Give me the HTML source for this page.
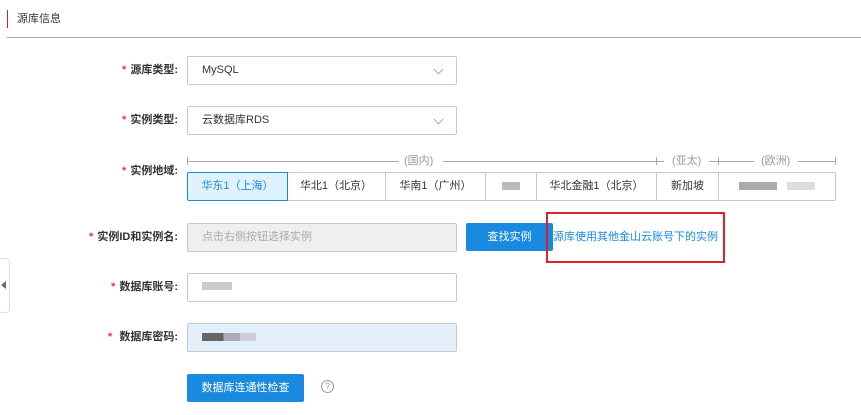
<!DOCTYPE html><html><head><meta charset="utf-8"><style>
body{margin:0;width:861px;height:415px;background:#fff;position:relative;overflow:hidden;font-family:"Liberation Sans","Noto Sans CJK SC",sans-serif;font-size:11px;color:#333}
.a{position:absolute}
.lbl{position:absolute;right:683px;font-weight:bold;color:#333;line-height:28px;white-space:nowrap}
.lbl i{color:#e33;font-style:normal;margin-right:4px}
.inp{position:absolute;left:187px;height:27px;border:1px solid #c8c8c8;border-radius:2px;line-height:27px;padding-left:14px;box-sizing:content-box;width:254px}
.chev{position:absolute;right:14px;top:9px;width:6px;height:6px;border-right:1px solid #aaa;border-bottom:1px solid #aaa;transform:rotate(45deg)}
.btn{position:absolute;background:#1a8ae0;color:#fff;text-align:center;border-radius:2px;line-height:28px;height:28px}
.seg{position:absolute;top:172px;height:27px;border:1px solid #c8c8c8;border-left:none;text-align:center;line-height:27px;color:#333}
.blur{display:inline-block;height:8px;vertical-align:middle}
</style></head><body>
<div class="a" style="left:7px;top:10px;width:1px;height:18px;background:#d0262b"></div>
<div class="a" style="left:17px;top:11px;line-height:16px;color:#333">源库信息</div>
<div class="a" style="left:7px;top:37px;width:854px;height:1px;background:#aaa"></div>

<div class="lbl" style="top:56px"><i>*</i>源库类型:</div>
<div class="inp" style="top:56px">MySQL<span class="chev"></span></div>
<div class="lbl" style="top:106px"><i>*</i>实例类型:</div>
<div class="inp" style="top:106px">云数据库RDS<span class="chev"></span></div>

<div class="lbl" style="top:157px"><i>*</i>实例地域:</div>
<div class="a" style="left:187px;top:157px;width:1px;height:8px;background:#aaa"></div>
<div class="a" style="left:187px;top:161px;width:212px;height:1px;background:#aaa"></div>
<div class="a" style="left:404px;top:154px;color:#999;font-size:11px;line-height:14px">(国内)</div>
<div class="a" style="left:443px;top:161px;width:213px;height:1px;background:#aaa"></div>
<div class="a" style="left:656px;top:157px;width:1px;height:8px;background:#aaa"></div>
<div class="a" style="left:656px;top:161px;width:8px;height:1px;background:#aaa"></div>
<div class="a" style="left:672px;top:154px;color:#999;font-size:11px;line-height:14px">(亚太)</div>
<div class="a" style="left:709px;top:161px;width:9px;height:1px;background:#aaa"></div>
<div class="a" style="left:718px;top:157px;width:1px;height:8px;background:#aaa"></div>
<div class="a" style="left:718px;top:161px;width:36px;height:1px;background:#aaa"></div>
<div class="a" style="left:761px;top:154px;color:#999;font-size:11px;line-height:14px">(欧洲)</div>
<div class="a" style="left:798px;top:161px;width:37px;height:1px;background:#aaa"></div>
<div class="a" style="left:835px;top:157px;width:1px;height:8px;background:#aaa"></div>

<div class="seg" style="left:187px;width:99px;border:1px solid #1a8ae0;background:#e0f2fd;color:#1a8ae0;z-index:2;border-radius:2px 0 0 2px">华东1（上海）</div>
<div class="seg" style="left:287px;width:98px">华北1（北京）</div>
<div class="seg" style="left:386px;width:99px">华南1（广州）</div>
<div class="seg" style="left:486px;width:50px"><span class="blur" style="width:18px;background:#bbb"></span></div>
<div class="seg" style="left:537px;width:119px">华北金融1（北京）</div>
<div class="seg" style="left:657px;width:61px">新加坡</div>
<div class="seg" style="left:719px;width:116px;border-radius:0 2px 2px 0"><span class="blur" style="width:38px;background:#aaa"></span><span class="blur" style="width:10px"></span><span class="blur" style="width:28px;background:#ddd"></span></div>

<div class="lbl" style="top:223px"><i>*</i>实例ID和实例名:</div>
<div class="inp" style="top:223px;background:#efefef;color:#aaa">点击右侧按钮选择实例</div>
<div class="btn" style="left:466px;top:223px;width:87px">查找实例</div>
<div class="a" style="left:546px;top:212px;width:175px;height:47px;border:2px solid #e0202a"></div>
<div class="a" style="left:553px;top:229px;color:#1a8ae0;line-height:16px">源库使用其他金山云账号下的实例</div>

<div class="a" style="left:-1px;top:258px;width:9px;height:53px;border:1px solid #ddd;border-radius:0 4px 4px 0"></div>
<div class="a" style="left:1px;top:281px;width:0;height:0;border-top:4px solid transparent;border-bottom:4px solid transparent;border-right:5px solid #667"></div>

<div class="lbl" style="top:273px"><i>*</i>数据库账号:</div>
<div class="inp" style="top:273px"><span class="blur" style="width:30px;background:#ccc;margin-top:-3px"></span></div>
<div class="lbl" style="top:323px"><i>*</i>&nbsp;数据库密码:</div>
<div class="inp" style="top:323px;background:#e3eefb"><span class="blur" style="width:54px;background:linear-gradient(90deg,#666 0 40%,#aab 40% 70%,#ccd 70%)"></span></div>

<div class="btn" style="left:187px;top:374px;width:117px">数据库连通性检查</div>
<div class="a" style="left:321px;top:380px;width:11px;height:11px;border:1px solid #999;border-radius:50%;font-size:9px;line-height:11px;text-align:center;color:#999">?</div>
</body></html>
